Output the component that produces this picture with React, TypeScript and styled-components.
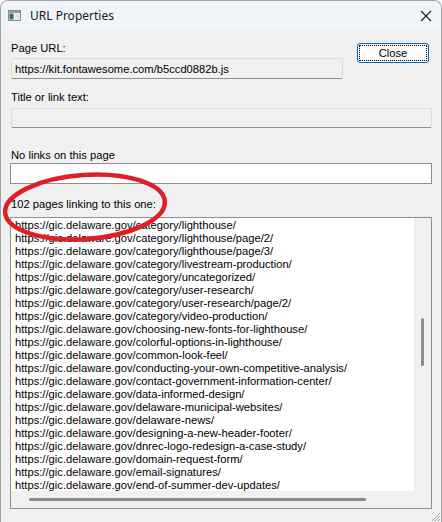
import styled, {createGlobalStyle} from 'styled-components'

const links = [
	'category/lighthouse/',
	'category/lighthouse/page/2/',
	'category/lighthouse/page/3/',
	'category/livestream-production/',
	'category/uncategorized/',
	'category/user-research/',
	'category/user-research/page/2/',
	'category/video-production/',
	'choosing-new-fonts-for-lighthouse/',
	'colorful-options-in-lighthouse/',
	'common-look-feel/',
	'conducting-your-own-competitive-analysis/',
	'contact-government-information-center/',
	'data-informed-design/',
	'delaware-municipal-websites/',
	'delaware-news/',
	'designing-a-new-header-footer/',
	'dnrec-logo-redesign-a-case-study/',
	'domain-request-form/',
	'email-signatures/',
	'end-of-summer-dev-updates/',
]

function App() {
	return (
		<>
			<GlobalStyle />
			<Window>
				<TitleBar>
					<WindowIcon />
					<Title>URL Properties</Title>
					<CloseX aria-label="close">
						<svg width="12" height="12" viewBox="0 0 12 12">
							<path d="M1 1 L11 11 M11 1 L1 11" stroke="#1a1a1a" strokeWidth="1.1" />
						</svg>
					</CloseX>
				</TitleBar>
				<Body>
					<TopRow>
						<UrlColumn>
							<Label $top={0} $bottom={3}>Page URL:</Label>
							<ReadOnlyField $height={21} $width={332}>
								https://kit.fontawesome.com/b5ccd0882b.js
							</ReadOnlyField>
						</UrlColumn>
						<CloseButton>Close</CloseButton>
					</TopRow>
					<Label $top={12} $bottom={4}>Title or link text:</Label>
					<ReadOnlyField $height={20} />
					<Label $top={21} $bottom={1}>No links on this page</Label>
					<WhiteField />
					<Label $top={14} $bottom={6}>102 pages linking to this one:</Label>
					<ListBox>
						<ListContent>
							{links.map((path) => (
								<ListLine key={path}>https://gic.delaware.gov/{path}</ListLine>
							))}
						</ListContent>
						<VGutter>
							<VThumb $offset={100} $length={48} />
						</VGutter>
						<HGutter>
							<HThumb $offset={18} $length={337} />
						</HGutter>
						<Corner />
					</ListBox>
				</Body>
				<Grip>
					<svg width="11" height="11" viewBox="0 0 11 11">
						<path d="M10 2 L2 10 M10 5 L5 10 M10 8 L8 10" stroke="#a8a8a8" strokeWidth="1" />
					</svg>
				</Grip>
				<Annotation width="176" height="80" viewBox="0 0 176 80">
					<ellipse
						cx="84"
						cy="39"
						rx="80"
						ry="32"
						transform="rotate(-4 84 39)"
						fill="none"
						stroke="#e11d25"
						strokeWidth="4.5"
					/>
				</Annotation>
			</Window>
		</>
	)
}

function WindowIcon() {
	return (
		<IconWrap>
			<svg width="13" height="11" viewBox="0 0 13 11">
				<rect x="0.5" y="0.5" width="12" height="10" fill="#f4f4f4" stroke="#8c8c8c" />
				<rect x="1" y="1" width="11" height="2" fill="#9a9a9a" />
				<rect x="1.5" y="3.5" width="4" height="6" fill="#2f6f6a" />
				<rect x="6.5" y="3.5" width="5" height="6" fill="#dfe6e8" />
			</svg>
		</IconWrap>
	)
}

const GlobalStyle = createGlobalStyle`
	html, body {
		margin: 0;
		background: #ffffff;
	}
	body {
		font-family: "Liberation Sans", Arial, sans-serif;
	}
`
const Window = styled.div`
	position: relative;
	width: 442px;
	height: 522px;
	box-sizing: border-box;
	border: 1px solid #a3a3a3;
	border-bottom: none;
	border-radius: 8px 8px 0 0;
	background: #f0f0f0;
	overflow: hidden;
	display: flex;
	flex-direction: column;
`
const TitleBar = styled.div`
	height: 29px;
	flex: none;
	display: flex;
	align-items: center;
	padding-left: 7px;
	background: #eef4f9;
`
const IconWrap = styled.span`
	display: flex;
	width: 13px;
	height: 11px;
	margin-right: 9px;
`
const Title = styled.span`
	flex: 1;
	font-family: "Noto Sans", "Open Sans", sans-serif;
	font-size: 12px;
	color: #1a1a1a;
`
const CloseX = styled.span`
	display: flex;
	margin-right: 9px;
`
const Body = styled.div`
	flex: 1;
	display: flex;
	flex-direction: column;
	padding: 12px 9px 0 9px;
	font-size: 11.2px;
	color: #000;
`
const TopRow = styled.div`
	display: flex;
	align-items: flex-start;
`
const UrlColumn = styled.div`
	display: flex;
	flex-direction: column;
`
const Label = styled.div<{$top: number; $bottom: number}>`
	height: 13px;
	line-height: 13px;
	margin-top: ${(p) => p.$top}px;
	margin-bottom: ${(p) => p.$bottom}px;
	padding-left: 1px;
	white-space: nowrap;
`
const ReadOnlyField = styled.div<{$height: number; $width?: number}>`
	box-sizing: border-box;
	height: ${(p) => p.$height}px;
	width: ${(p) => (p.$width ? `${p.$width}px` : 'auto')};
	margin-left: 1px;
	padding-left: 3px;
	display: flex;
	align-items: center;
	background: #f0f0f0;
	border: 1px solid #dcdcdc;
	border-bottom-color: #8e8e8e;
	border-radius: 2px;
	white-space: nowrap;
`
const WhiteField = styled.div`
	box-sizing: border-box;
	height: 21px;
	background: #ffffff;
	border: 1px solid #8f8f8f;
`
const CloseButton = styled.button`
	position: relative;
	box-sizing: border-box;
	width: 72px;
	height: 20px;
	margin: 1px 3px 0 auto;
	padding: 0;
	background: #fdfdfd;
	border: 1px solid #0067c0;
	border-radius: 3px;
	font-family: "Liberation Sans", Arial, sans-serif;
	font-size: 11.2px;
	color: #000;
	&::after {
		content: '';
		position: absolute;
		inset: 1px;
		border: 1px dotted #000;
		border-radius: 1px;
	}
`
const ListBox = styled.div`
	box-sizing: border-box;
	height: 292px;
	display: grid;
	grid-template-columns: 1fr 17px;
	grid-template-rows: 1fr 17px;
	border: 1px solid #8f8f8f;
	background: #f0f0f0;
`
const ListContent = styled.div`
	background: #ffffff;
	overflow: hidden;
	padding: 1px 0 0 4px;
`
const ListLine = styled.div`
	height: 13px;
	line-height: 13px;
	white-space: nowrap;
`
const VGutter = styled.div`
	display: flex;
	justify-content: center;
	background: #f0f0f0;
`
const VThumb = styled.div<{$offset: number; $length: number}>`
	width: 3px;
	height: ${(p) => p.$length}px;
	margin-top: ${(p) => p.$offset}px;
	border-radius: 2px;
	background: #8a8a8a;
`
const HGutter = styled.div`
	display: flex;
	align-items: center;
	background: #f0f0f0;
`
const HThumb = styled.div<{$offset: number; $length: number}>`
	height: 3px;
	width: ${(p) => p.$length}px;
	margin-left: ${(p) => p.$offset}px;
	border-radius: 2px;
	background: #8a8a8a;
`
const Corner = styled.div`
	background: #f0f0f0;
`
const Grip = styled.div`
	position: absolute;
	right: 0;
	bottom: 0;
	display: flex;
`
const Annotation = styled.svg`
	position: absolute;
	left: 0;
	top: 167px;
	pointer-events: none;
`

export default App
